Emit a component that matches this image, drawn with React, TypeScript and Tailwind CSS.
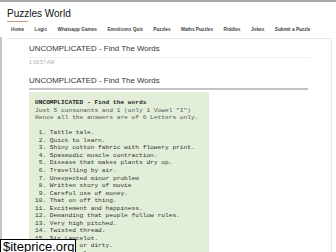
import React from "react";

const nav = [
  "Home",
  "Logic",
  "Whatsapp Games",
  "Emoticons Quiz",
  "Puzzles",
  "Maths Puzzles",
  "Riddles",
  "Jokes",
  "Submit a Puzzle",
];

const lines: { t: string; b?: boolean; c?: string }[] = [
  { t: "UNCOMPLICATED - Find the words", b: true, c: "text-[#1f1f1f]" },
  { t: 'Just 5 consonants and 1 (only 1 Vowel "I")', c: "text-[#555]" },
  { t: "Hence all the answers are of 6 Letters only.", c: "text-[#555]" },
  { t: " " },
  { t: " 1. Tattle tale." },
  { t: " 2. Quick to learn." },
  { t: " 3. Shiny cotton fabric with flowery print." },
  { t: " 4. Spasmodic muscle contraction." },
  { t: " 5. Disease that makes plants dry up." },
  { t: " 6. Travelling by air." },
  { t: " 7. Unexpected minor problem" },
  { t: " 8. Written story of movie" },
  { t: " 9. Careful use of money." },
  { t: "10. That on off thing." },
  { t: "11. Excitement and happiness." },
  { t: "12. Demanding that people follow rules." },
  { t: "13. Very high pitched." },
  { t: "14. Twisted thread." },
  { t: "15. Sir Lancelot." },
  { t: "16. Unclean or dirty." },
  { t: "17. Hard to please." },
];

export default function App() {
  return (
    <div className="relative w-[336px] h-[252px] overflow-hidden bg-white border-t-2 border-[#a9a9a9] font-['Liberation_Sans',Arial,sans-serif]">
      <div className="pl-[7px] pt-[5px] h-[18px]">
        <div className="text-[10px] leading-[13px] text-[#111]">Puzzles World</div>
      </div>
      <div className="ml-[7px] mt-[1px] w-[21px] h-px bg-[#c9967c]" />
      <div className="flex items-center h-[15px] pl-[11px] gap-[10.5px] text-[4.7px] font-bold text-[#444] whitespace-nowrap">
        {nav.map((n) => (
          <span key={n}>{n}</span>
        ))}
      </div>
      <div className="border-l-2 border-[#c6c6c6] h-[220px] pt-px">
        <div className="ml-[5px] w-[325px] h-full border-t border-r border-[#e8e8e8] pl-[22px]">
          <div className="pt-[5px] pb-[3px] mr-[20px] border-b border-[#efefef]">
            <div className="text-[7.9px] leading-[10px] text-[#333]">UNCOMPLICATED - Find The Words</div>
          </div>
          <div className="mt-[1px] text-[5px] leading-[6px] text-[#aaa]">1:16:57 AM</div>
          <div className="mt-[11px] mr-[23px] pb-[2px] border-b-2 border-[#c2c2c2]">
            <div className="text-[7.9px] leading-[10px] text-[#333]">UNCOMPLICATED - Find The Words</div>
          </div>
          <div className="mt-[2px] w-[180px] h-[200px] bg-[#e2eed8] pt-[7.2px] pl-[6px]">
            {lines.map((l, i) => (
              <div
                key={i}
                className={`whitespace-pre font-['Liberation_Mono','Courier_New',monospace] text-[6.2px] leading-[7.53px] ${
                  l.b ? "font-bold" : ""
                } ${l.c ?? "text-[#333]"}`}
              >
                {l.t}
              </div>
            ))}
          </div>
        </div>
      </div>
      <div className="absolute left-0 top-[237px] w-[76px] h-[20px] border border-black bg-white pl-[2px] text-[13px] leading-[14px] text-black">
        $iteprice.org
      </div>
    </div>
  );
}
